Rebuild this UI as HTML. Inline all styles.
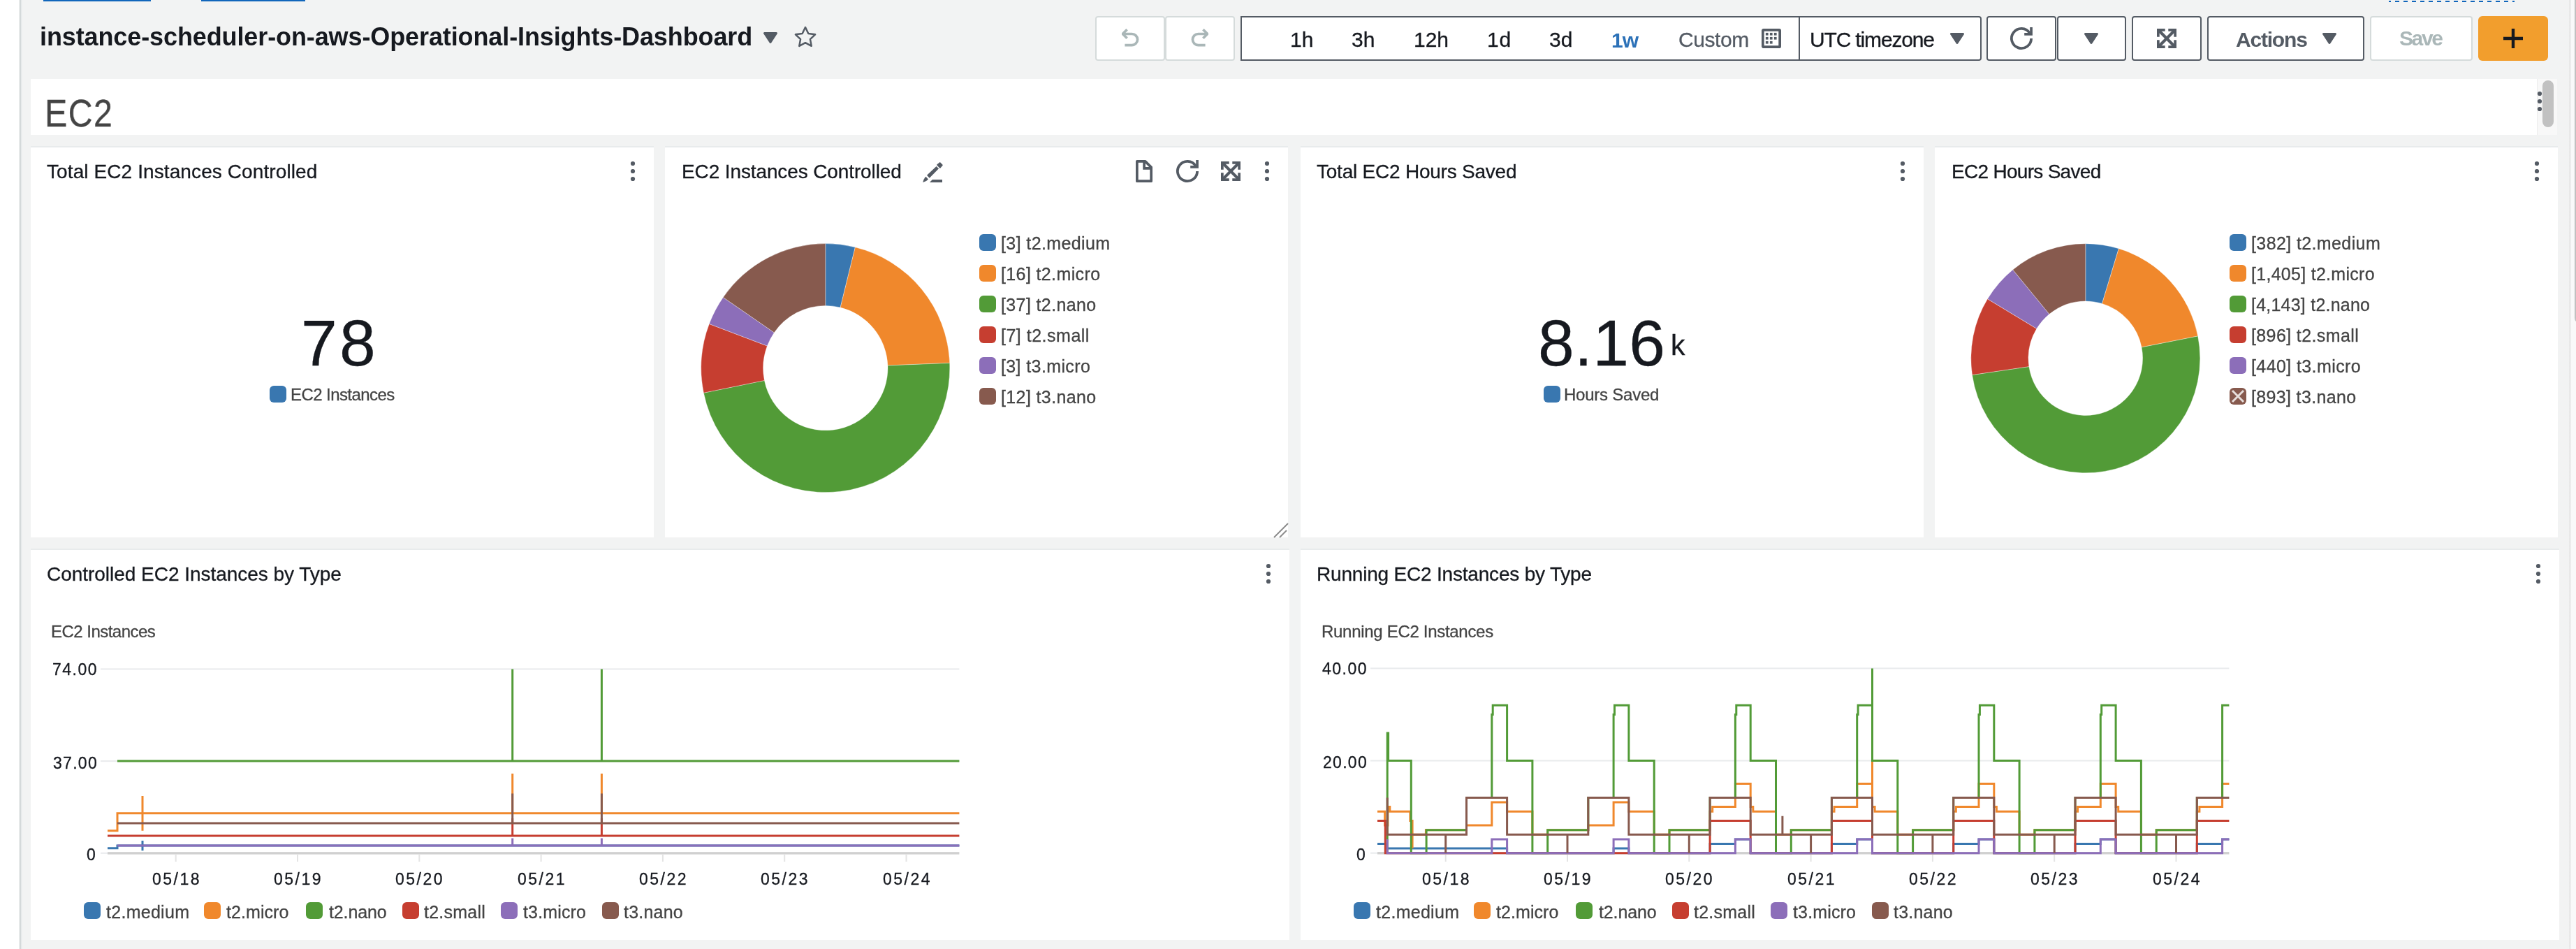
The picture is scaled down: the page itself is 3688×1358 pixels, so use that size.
<!DOCTYPE html><html><head><meta charset="utf-8"><style>
*{margin:0;padding:0;box-sizing:border-box}
html,body{width:3688px;height:1358px;overflow:hidden;background:#f2f3f3;font-family:"Liberation Sans",sans-serif}
.ab{position:absolute}
.t{position:absolute;white-space:nowrap;will-change:transform}
.r{-webkit-text-stroke:0.3px currentColor}
svg.ab{overflow:visible}
.panel{position:absolute;background:#fff;box-shadow:0 -2px 0 #e8ebec}
</style></head><body>
<div class="ab" style="left:0px;top:0px;width:28px;height:1358px;background:#fff"></div>
<div class="ab" style="left:28px;top:0px;width:4px;height:1358px;background:linear-gradient(90deg,#bfc5c7 0,#c3c9cb 1px,#d7dcdd 1px,#d7dcdd 2px,#e6e9ea 2px,#e6e9ea 3px,#eef0f0 3px)"></div>
<div class="ab" style="left:3678px;top:0px;width:3px;height:1358px;background:linear-gradient(90deg,#ededed 0,#e6e6e6 1px,#e6e6e6 2px,#f0f0f0 2px)"></div>
<div class="ab" style="left:3681px;top:0px;width:7px;height:1358px;background:#f9f9f9"></div>
<div class="ab" style="left:3686px;top:-10px;width:16px;height:473px;background:#c1c1c1;border-radius:8px"></div>
<div class="ab" style="left:62px;top:0px;width:154px;height:2px;background:#1166bb"></div>
<div class="ab" style="left:288px;top:0px;width:149px;height:2px;background:#1166bb"></div>
<div class="ab" style="left:3420px;top:1px;width:180px;height:2px;background:repeating-linear-gradient(90deg,#1166bb 0 6px,transparent 6px 12px);background-position:-3px 0"></div>
<div class="t" style="left:57px;top:34.5px;font-size:36px;line-height:36px;color:#16191f;font-weight:700;letter-spacing:-0.108px;">instance-scheduler-on-aws-Operational-Insights-Dashboard</div>
<svg class="ab" style="left:1093px;top:46px" width="20" height="16" viewBox="0 0 20 16"><path d="M1.5 1.5 H18.5 L10.0 14.5 Z" fill="#545b64" stroke="#545b64" stroke-width="3" stroke-linejoin="round"/></svg>
<svg class="ab" style="left:1137px;top:37px" width="32" height="31" viewBox="0 0 32 31"><polygon points="16.00,2.05 20.29,10.94 30.08,12.28 22.94,19.11 24.70,28.82 16.00,24.15 7.30,28.82 9.06,19.11 1.92,12.28 11.71,10.94" fill="none" stroke="#545b64" stroke-width="2.5" stroke-linejoin="round"/></svg>
<div class="ab" style="left:1568px;top:23px;width:100px;height:64px;border:2px solid #d5dbdb;border-radius:4px;background:#fff;"></div>
<div class="ab" style="left:1668px;top:23px;width:100px;height:64px;border:2px solid #d5dbdb;border-radius:4px;background:#fff;"></div>
<svg class="ab" style="left:1605.5px;top:41px" width="26" height="26" viewBox="0 0 26 26"><path d="M4.4 23.6 H14.5 A8.05 8.05 0 0 0 14.5 7.5 H2.5" fill="none" stroke="#aab7b8" stroke-width="3.7"/><path d="M7.6 1.2 L1.3 7.5 L7.6 13.8" fill="none" stroke="#aab7b8" stroke-width="3.7" stroke-linejoin="bevel"/></svg>
<svg class="ab" style="left:1704px;top:41px" width="26" height="26" viewBox="0 0 26 26"><g transform="translate(26 0) scale(-1 1)"><path d="M4.4 23.6 H14.5 A8.05 8.05 0 0 0 14.5 7.5 H2.5" fill="none" stroke="#aab7b8" stroke-width="3.7"/><path d="M7.6 1.2 L1.3 7.5 L7.6 13.8" fill="none" stroke="#aab7b8" stroke-width="3.7" stroke-linejoin="bevel"/></g></svg>
<div class="ab" style="left:1776px;top:23px;width:801px;height:64px;border:2px solid #545b64;border-radius:0;background:#fff;"></div>
<div class="t r" style="left:1846.5px;top:42.0px;font-size:30px;line-height:30px;color:#16191f;font-weight:400;letter-spacing:0.0px;">1h</div>
<div class="t r" style="left:1935px;top:42.0px;font-size:30px;line-height:30px;color:#16191f;font-weight:400;letter-spacing:0.0px;">3h</div>
<div class="t r" style="left:2023.7px;top:42.0px;font-size:30px;line-height:30px;color:#16191f;font-weight:400;letter-spacing:0.0px;">12h</div>
<div class="t r" style="left:2129px;top:42.0px;font-size:30px;line-height:30px;color:#16191f;font-weight:400;letter-spacing:0.9px;">1d</div>
<div class="t r" style="left:2218.4px;top:42.0px;font-size:30px;line-height:30px;color:#16191f;font-weight:400;letter-spacing:0.0px;">3d</div>
<div class="t" style="left:2306.7px;top:43.0px;font-size:30px;line-height:30px;color:#2d72b8;font-weight:700;letter-spacing:-0.9px;">1w</div>
<div class="t r" style="left:2403px;top:42.0px;font-size:30px;line-height:30px;color:#545b64;font-weight:400;letter-spacing:-0.42px;">Custom</div>
<svg class="ab" style="left:2522px;top:41px" width="28" height="28" viewBox="0 0 28 28"><rect x="1.85" y="1.85" width="24.3" height="24.3" rx="1" fill="none" stroke="#545b64" stroke-width="3.7"/><rect x="5.9" y="5.9" width="3.7" height="3.7" fill="#545b64"/><rect x="11.9" y="5.9" width="3.7" height="3.7" fill="#545b64"/><rect x="17.9" y="5.9" width="3.7" height="3.7" fill="#545b64"/><rect x="5.9" y="11.9" width="3.7" height="3.7" fill="#545b64"/><rect x="11.9" y="11.9" width="3.7" height="3.7" fill="#545b64"/><rect x="17.9" y="11.9" width="3.7" height="3.7" fill="#545b64"/><rect x="5.9" y="17.9" width="3.7" height="3.7" fill="#545b64"/><rect x="11.9" y="17.9" width="3.7" height="3.7" fill="#545b64"/></svg>
<div class="ab" style="left:2575px;top:23px;width:262px;height:64px;border:2px solid #545b64;border-radius:0 4px 4px 0;background:#fff;"></div>
<div class="t r" style="left:2591.3px;top:42.0px;font-size:30px;line-height:30px;color:#16191f;font-weight:400;letter-spacing:-1.1560000000000001px;">UTC timezone</div>
<svg class="ab" style="left:2792px;top:47px" width="20" height="16" viewBox="0 0 20 16"><path d="M1.5 1.5 H18.5 L10.0 14.5 Z" fill="#545b64" stroke="#545b64" stroke-width="3" stroke-linejoin="round"/></svg>
<div class="ab" style="left:2844px;top:23px;width:100px;height:64px;border:2px solid #545b64;border-radius:4px;background:#fff;"></div>
<svg class="ab" style="left:2878px;top:39px" width="32" height="32" viewBox="0 0 32 32"><path d="M30.1 16 A14.1 14.1 0 1 1 27.8 8.3" fill="none" stroke="#545b64" stroke-width="3.8"/><path d="M28.2 0 H31.9 V11.8 H20.2 V8.1 H28.2 Z" fill="#545b64"/></svg>
<div class="ab" style="left:2945px;top:23px;width:99px;height:64px;border:2px solid #545b64;border-radius:4px;background:#fff;"></div>
<svg class="ab" style="left:2984px;top:47px" width="20" height="16" viewBox="0 0 20 16"><path d="M1.5 1.5 H18.5 L10.0 14.5 Z" fill="#545b64" stroke="#545b64" stroke-width="3" stroke-linejoin="round"/></svg>
<div class="ab" style="left:3052px;top:23px;width:100px;height:64px;border:2px solid #545b64;border-radius:4px;background:#fff;"></div>
<svg class="ab" style="left:3088px;top:41px" width="28" height="28" viewBox="0 0 28 28"><path d="M0 0H11.7V3.7H3.7V11.7H0Z" fill="#545b64"/><g transform="translate(28 0) scale(-1 1)"><path d="M0 0H11.7V3.7H3.7V11.7H0Z" fill="#545b64"/></g><g transform="translate(0 28) scale(1 -1)"><path d="M0 0H11.7V3.7H3.7V11.7H0Z" fill="#545b64"/></g><g transform="translate(28 28) scale(-1 -1)"><path d="M0 0H11.7V3.7H3.7V11.7H0Z" fill="#545b64"/></g><path d="M2.6 2.6 L25.4 25.4 M25.4 2.6 L2.6 25.4" stroke="#545b64" stroke-width="4.2"/></svg>
<div class="ab" style="left:3160px;top:23px;width:225px;height:64px;border:2px solid #545b64;border-radius:4px;background:#fff;"></div>
<div class="t" style="left:3201.0px;top:42.0px;font-size:30px;line-height:30px;color:#545b64;font-weight:700;letter-spacing:-1.2px;">Actions</div>
<svg class="ab" style="left:3325px;top:47px" width="20" height="16" viewBox="0 0 20 16"><path d="M1.5 1.5 H18.5 L10.0 14.5 Z" fill="#545b64" stroke="#545b64" stroke-width="3" stroke-linejoin="round"/></svg>
<div class="ab" style="left:3393px;top:23px;width:147px;height:64px;border:2px solid #d5dbdb;border-radius:4px;background:#fff;"></div>
<div class="t" style="left:3434.5px;top:40.0px;font-size:30px;line-height:30px;color:#aab7b8;font-weight:700;letter-spacing:-2.4px;">Save</div>
<div class="ab" style="left:3548px;top:23px;width:100px;height:64px;background:#f29e2d;border-radius:6px"></div>
<svg class="ab" style="left:3584px;top:41px" width="28" height="28" viewBox="0 0 28 28"><path d="M14 0 V28 M0 14 H28" stroke="#16191f" stroke-width="4.4"/></svg>
<div class="ab" style="left:44px;top:113px;width:3588px;height:80px;background:#fff"></div>
<div class="ab" style="left:3632px;top:113px;width:29px;height:80px;background:#f8f8f8;border-left:1px solid #ececec"></div>
<div class="ab" style="left:3640px;top:115px;width:16px;height:67px;background:#c1c1c1;border-radius:8px"></div>
<div class="t r" style="left:64px;top:135.2px;font-size:55px;line-height:55px;color:#444;font-weight:400;letter-spacing:1.5px;transform:scaleX(0.88);transform-origin:0 0;">EC2</div>
<svg class="ab" style="left:3632px;top:130px" width="8" height="30" viewBox="0 0 8 30"><circle cx="4" cy="4" r="3.1" fill="#545b64"/><circle cx="4" cy="15" r="3.1" fill="#545b64"/><circle cx="4" cy="26" r="3.1" fill="#545b64"/></svg>
<div class="panel" style="left:44px;top:211px;width:892px;height:558px"></div>
<svg class="ab" style="left:902px;top:230px" width="8" height="30" viewBox="0 0 8 30"><circle cx="4" cy="4" r="3.1" fill="#545b64"/><circle cx="4" cy="15" r="3.1" fill="#545b64"/><circle cx="4" cy="26" r="3.1" fill="#545b64"/></svg>
<div class="panel" style="left:952px;top:211px;width:892px;height:558px"></div>
<svg class="ab" style="left:1810px;top:230px" width="8" height="30" viewBox="0 0 8 30"><circle cx="4" cy="4" r="3.1" fill="#545b64"/><circle cx="4" cy="15" r="3.1" fill="#545b64"/><circle cx="4" cy="26" r="3.1" fill="#545b64"/></svg>
<div class="panel" style="left:1862px;top:211px;width:892px;height:558px"></div>
<svg class="ab" style="left:2720px;top:230px" width="8" height="30" viewBox="0 0 8 30"><circle cx="4" cy="4" r="3.1" fill="#545b64"/><circle cx="4" cy="15" r="3.1" fill="#545b64"/><circle cx="4" cy="26" r="3.1" fill="#545b64"/></svg>
<div class="panel" style="left:2770px;top:211px;width:892px;height:558px"></div>
<svg class="ab" style="left:3628px;top:230px" width="8" height="30" viewBox="0 0 8 30"><circle cx="4" cy="4" r="3.1" fill="#545b64"/><circle cx="4" cy="15" r="3.1" fill="#545b64"/><circle cx="4" cy="26" r="3.1" fill="#545b64"/></svg>
<div class="t r" style="left:67.0px;top:232.1px;font-size:28px;line-height:28px;color:#16191f;font-weight:400;letter-spacing:0.099px;">Total EC2 Instances Controlled</div>
<div class="t r" style="left:976.0px;top:232.1px;font-size:28px;line-height:28px;color:#16191f;font-weight:400;letter-spacing:-0.119px;">EC2 Instances Controlled</div>
<div class="t r" style="left:1885.0px;top:232.1px;font-size:28px;line-height:28px;color:#16191f;font-weight:400;letter-spacing:-0.225px;">Total EC2 Hours Saved</div>
<div class="t r" style="left:2793.5px;top:232.1px;font-size:28px;line-height:28px;color:#16191f;font-weight:400;letter-spacing:-0.708px;">EC2 Hours Saved</div>
<svg class="ab" style="left:1321px;top:233px" width="28" height="28" viewBox="0 0 28 28"><path d="M21 2.9 L24.8 -0.1 L28 3.2 L24.8 7 Z" fill="#545b64" stroke="#545b64" stroke-width="1.5" stroke-linejoin="round"/><path d="M6 17.7 L19.6 5 L23 8.2 L9.7 21.8 Z" fill="#545b64"/><path d="M4.5 19.8 L8 23.4 Q5 27 0.2 27.9 Q1 23 4.5 19.8 Z" fill="#545b64"/><path d="M10 27.9 L13.8 24.1 H28 V27.9 Z" fill="#545b64"/></svg>
<svg class="ab" style="left:1626px;top:229px" width="24" height="32" viewBox="0 0 24 32"><path d="M1.85 1.85 H13.6 L22.15 10.4 V30.15 H1.85 Z" fill="none" stroke="#545b64" stroke-width="3.7" stroke-linejoin="round"/><path d="M12.1 1.85 V11.9 H22.15" fill="none" stroke="#545b64" stroke-width="3.7"/></svg>
<svg class="ab" style="left:1684px;top:229px" width="32" height="32" viewBox="0 0 32 32"><path d="M30.1 16 A14.1 14.1 0 1 1 27.8 8.3" fill="none" stroke="#545b64" stroke-width="3.8"/><path d="M28.2 0 H31.9 V11.8 H20.2 V8.1 H28.2 Z" fill="#545b64"/></svg>
<svg class="ab" style="left:1748px;top:231px" width="28" height="28" viewBox="0 0 28 28"><path d="M0 0H11.7V3.7H3.7V11.7H0Z" fill="#545b64"/><g transform="translate(28 0) scale(-1 1)"><path d="M0 0H11.7V3.7H3.7V11.7H0Z" fill="#545b64"/></g><g transform="translate(0 28) scale(1 -1)"><path d="M0 0H11.7V3.7H3.7V11.7H0Z" fill="#545b64"/></g><g transform="translate(28 28) scale(-1 -1)"><path d="M0 0H11.7V3.7H3.7V11.7H0Z" fill="#545b64"/></g><path d="M2.6 2.6 L25.4 25.4 M25.4 2.6 L2.6 25.4" stroke="#545b64" stroke-width="4.2"/></svg>
<svg class="ab" style="left:1820px;top:745px" width="26" height="26"><path d="M4 24 L24 4 M12 24 L22 14" stroke="#8c8c8c" stroke-width="2"/></svg>
<div class="t r" style="left:431.0px;top:445.0px;font-size:93px;line-height:93px;color:#16191f;font-weight:400;letter-spacing:3.2px;">78</div>
<div class="ab" style="left:386px;top:552px;width:24px;height:24px;background:#3977b0;border-radius:6px"></div>
<div class="t r" style="left:416.1px;top:553.2px;font-size:24px;line-height:24px;color:#444;font-weight:400;letter-spacing:-0.571px;">EC2 Instances</div>
<div class="t r" style="left:2201.5px;top:445.0px;font-size:93px;line-height:93px;color:#16191f;font-weight:400;letter-spacing:0.30000000000000004px;">8.16</div>
<div class="t r" style="left:2392px;top:474.1px;font-size:41px;line-height:41px;color:#16191f;font-weight:400;letter-spacing:0px;">k</div>
<div class="ab" style="left:2210px;top:552px;width:24px;height:24px;background:#3977b0;border-radius:6px"></div>
<div class="t r" style="left:2239.0px;top:553.2px;font-size:24px;line-height:24px;color:#444;font-weight:400;letter-spacing:-0.229px;">Hours Saved</div>
<svg class="ab" style="left:0;top:0" width="3688" height="1358"><path d="M1181.80 348.60 A178 178 0 0 1 1224.40 353.77 L1203.15 439.99 A89.2 89.2 0 0 0 1181.80 437.40 Z" fill="#3977b0" stroke="#fff" stroke-width="0.35"/><path d="M1224.40 353.77 A178 178 0 0 1 1359.66 519.43 L1270.93 523.01 A89.2 89.2 0 0 0 1203.15 439.99 Z" fill="#f0882c" stroke="#fff" stroke-width="0.35"/><path d="M1359.66 519.43 A178 178 0 0 1 1007.40 562.20 L1094.40 544.44 A89.2 89.2 0 0 0 1270.93 523.01 Z" fill="#529b37" stroke="#fff" stroke-width="0.35"/><path d="M1007.40 562.20 A178 178 0 0 1 1015.37 463.48 L1098.40 494.97 A89.2 89.2 0 0 0 1094.40 544.44 Z" fill="#c63e30" stroke="#fff" stroke-width="0.35"/><path d="M1015.37 463.48 A178 178 0 0 1 1035.31 425.48 L1108.39 475.93 A89.2 89.2 0 0 0 1098.40 494.97 Z" fill="#8c6eb9" stroke="#fff" stroke-width="0.35"/><path d="M1035.31 425.48 A178 178 0 0 1 1181.80 348.60 L1181.80 437.40 A89.2 89.2 0 0 0 1108.39 475.93 Z" fill="#875a4e" stroke="#fff" stroke-width="0.35"/><path d="M2985.80 348.70 A164 164 0 0 1 3033.35 355.75 L3009.52 434.41 A81.8 81.8 0 0 0 2985.80 430.90 Z" fill="#3977b0" stroke="#fff" stroke-width="0.35"/><path d="M3033.35 355.75 A164 164 0 0 1 3146.70 480.98 L3066.06 496.88 A81.8 81.8 0 0 0 3009.52 434.41 Z" fill="#f0882c" stroke="#fff" stroke-width="0.35"/><path d="M3146.70 480.98 A164 164 0 1 1 2823.54 536.52 L2904.87 524.58 A81.8 81.8 0 1 0 3066.06 496.88 Z" fill="#529b37" stroke="#fff" stroke-width="0.35"/><path d="M2823.54 536.52 A164 164 0 0 1 2845.50 427.78 L2915.82 470.34 A81.8 81.8 0 0 0 2904.87 524.58 Z" fill="#c63e30" stroke="#fff" stroke-width="0.35"/><path d="M2845.50 427.78 A164 164 0 0 1 2881.70 385.98 L2933.88 449.49 A81.8 81.8 0 0 0 2915.82 470.34 Z" fill="#8c6eb9" stroke="#fff" stroke-width="0.35"/><path d="M2881.70 385.98 A164 164 0 0 1 2985.80 348.70 L2985.80 430.90 A81.8 81.8 0 0 0 2933.88 449.49 Z" fill="#875a4e" stroke="#fff" stroke-width="0.35"/></svg>
<div class="ab" style="left:1402px;top:335px;width:24px;height:24px;background:#3977b0;border-radius:6px"></div>
<div class="t r" style="left:1433.4px;top:336.0px;font-size:25px;line-height:25px;color:#444;font-weight:400;letter-spacing:0.389px;">[3] t2.medium</div>
<div class="ab" style="left:3192px;top:335px;width:24px;height:24px;background:#3977b0;border-radius:6px"></div>
<div class="t r" style="left:3223.0px;top:336.0px;font-size:25px;line-height:25px;color:#444;font-weight:400;letter-spacing:0.39px;">[382] t2.medium</div>
<div class="ab" style="left:1402px;top:379px;width:24px;height:24px;background:#f0882c;border-radius:6px"></div>
<div class="t r" style="left:1433.4px;top:380.0px;font-size:25px;line-height:25px;color:#444;font-weight:400;letter-spacing:0.374px;">[16] t2.micro</div>
<div class="ab" style="left:3192px;top:379px;width:24px;height:24px;background:#f0882c;border-radius:6px"></div>
<div class="t r" style="left:3223.0px;top:380.0px;font-size:25px;line-height:25px;color:#444;font-weight:400;letter-spacing:0.282px;">[1,405] t2.micro</div>
<div class="ab" style="left:1402px;top:423px;width:24px;height:24px;background:#529b37;border-radius:6px"></div>
<div class="t r" style="left:1433.4px;top:424.0px;font-size:25px;line-height:25px;color:#444;font-weight:400;letter-spacing:0.376px;">[37] t2.nano</div>
<div class="ab" style="left:3192px;top:423px;width:24px;height:24px;background:#529b37;border-radius:6px"></div>
<div class="t r" style="left:3223.0px;top:424.0px;font-size:25px;line-height:25px;color:#444;font-weight:400;letter-spacing:0.228px;">[4,143] t2.nano</div>
<div class="ab" style="left:1402px;top:467px;width:24px;height:24px;background:#c63e30;border-radius:6px"></div>
<div class="t r" style="left:1433.4px;top:468.0px;font-size:25px;line-height:25px;color:#444;font-weight:400;letter-spacing:0.505px;">[7] t2.small</div>
<div class="ab" style="left:3192px;top:467px;width:24px;height:24px;background:#c63e30;border-radius:6px"></div>
<div class="t r" style="left:3223.0px;top:468.0px;font-size:25px;line-height:25px;color:#444;font-weight:400;letter-spacing:0.385px;">[896] t2.small</div>
<div class="ab" style="left:1402px;top:511px;width:24px;height:24px;background:#8c6eb9;border-radius:6px"></div>
<div class="t r" style="left:1433.4px;top:512.0px;font-size:25px;line-height:25px;color:#444;font-weight:400;letter-spacing:0.381px;">[3] t3.micro</div>
<div class="ab" style="left:3192px;top:511px;width:24px;height:24px;background:#8c6eb9;border-radius:6px"></div>
<div class="t r" style="left:3223.0px;top:512.0px;font-size:25px;line-height:25px;color:#444;font-weight:400;letter-spacing:0.402px;">[440] t3.micro</div>
<div class="ab" style="left:1402px;top:555px;width:24px;height:24px;background:#875a4e;border-radius:6px"></div>
<div class="t r" style="left:1433.4px;top:556.0px;font-size:25px;line-height:25px;color:#444;font-weight:400;letter-spacing:0.376px;">[12] t3.nano</div>
<div class="ab" style="left:3192px;top:555px;width:24px;height:24px;background:#875a4e;border-radius:6px"></div>
<div class="t r" style="left:3223.0px;top:556.0px;font-size:25px;line-height:25px;color:#444;font-weight:400;letter-spacing:0.344px;">[893] t3.nano</div>
<svg class="ab" style="left:3192px;top:555px" width="24" height="24"><path d="M4 4 L20 20 M20 4 L4 20" stroke="#fff" stroke-opacity="0.8" stroke-width="3"/></svg>
<div class="panel" style="left:44px;top:787px;width:1802px;height:558px"></div><svg class="ab" style="left:1812px;top:806px" width="8" height="30" viewBox="0 0 8 30"><circle cx="4" cy="4" r="3.1" fill="#545b64"/><circle cx="4" cy="15" r="3.1" fill="#545b64"/><circle cx="4" cy="26" r="3.1" fill="#545b64"/></svg><div class="t r" style="left:67.0px;top:807.5px;font-size:28px;line-height:28px;color:#16191f;font-weight:400;letter-spacing:-0.029px;">Controlled EC2 Instances by Type</div><div class="t r" style="left:73.2px;top:892.0px;font-size:24px;line-height:24px;color:#444;font-weight:400;letter-spacing:-0.525px;">EC2 Instances</div><div class="t r" style="left:75px;top:946.8px;font-size:23px;line-height:23px;color:#16191f;font-weight:400;letter-spacing:1.5px;">74.00</div><div class="t r" style="left:75.6px;top:1080.5px;font-size:23px;line-height:23px;color:#16191f;font-weight:400;letter-spacing:1.2850000000000001px;">37.00</div><div class="t r" style="left:123.6px;top:1212.2px;font-size:23px;line-height:23px;color:#16191f;font-weight:400;letter-spacing:0.6px;">0</div><svg class="ab" style="left:0;top:0" width="3688" height="1358"><rect x="144" y="956.4" width="1229.4" height="2" fill="#e9ebed"/><rect x="144" y="1088.1" width="1229.4" height="2" fill="#e9ebed"/><rect x="144" y="1219.8" width="10" height="2" fill="#e9ebed"/><rect x="154" y="1219.2" width="1219.4" height="3.4" fill="#d0d0d0"/><rect x="250.70000000000002" y="1223" width="2" height="10" fill="#e4e4e4"/><rect x="425.0" y="1223" width="2" height="10" fill="#e4e4e4"/><rect x="599.3000000000001" y="1223" width="2" height="10" fill="#e4e4e4"/><rect x="773.6" y="1223" width="2" height="10" fill="#e4e4e4"/><rect x="947.9" y="1223" width="2" height="10" fill="#e4e4e4"/><rect x="1122.2000000000003" y="1223" width="2" height="10" fill="#e4e4e4"/><rect x="1296.5000000000002" y="1223" width="2" height="10" fill="#e4e4e4"/><path d="M154.0 1213.7H168.0V1210.1H204.0V1203.0H204.0V1217.2H204.0V1210.1H1373.4" fill="none" stroke="#3977b0" stroke-width="3" stroke-linejoin="miter"/><path d="M154.0 1188.8H168.0V1163.8H204.0V1138.9H204.0V1188.8H204.0V1163.8H733.7V1106.9H733.7V1163.8H861.4V1106.9H861.4V1163.8H1373.4" fill="none" stroke="#f0882c" stroke-width="3" stroke-linejoin="miter"/><path d="M168.0 1089.1H733.7V957.4H733.7V1089.1H861.4V957.4H861.4V1089.1H1373.4" fill="none" stroke="#529b37" stroke-width="3" stroke-linejoin="miter"/><path d="M154.0 1195.9H733.7V1171.0H733.7V1195.9H861.4V1171.0H861.4V1195.9H1373.4" fill="none" stroke="#c63e30" stroke-width="3" stroke-linejoin="miter"/><path d="M168.0 1210.1H733.7V1199.4H733.7V1210.1H861.4V1199.4H861.4V1210.1H1373.4" fill="none" stroke="#8c6eb9" stroke-width="3" stroke-linejoin="miter"/><path d="M168.0 1178.1H733.7V1135.4H733.7V1178.1H861.4V1135.4H861.4V1178.1H1373.4" fill="none" stroke="#875a4e" stroke-width="3" stroke-linejoin="miter"/></svg><div class="t r" style="left:252.70000000000002px;top:1246.8px;font-size:23px;line-height:23px;color:#16191f;font-weight:400;letter-spacing:2.535px;transform:translateX(-50%);">05/18</div><div class="t r" style="left:427.0px;top:1246.8px;font-size:23px;line-height:23px;color:#16191f;font-weight:400;letter-spacing:2.535px;transform:translateX(-50%);">05/19</div><div class="t r" style="left:601.3000000000001px;top:1246.8px;font-size:23px;line-height:23px;color:#16191f;font-weight:400;letter-spacing:2.535px;transform:translateX(-50%);">05/20</div><div class="t r" style="left:775.6px;top:1246.8px;font-size:23px;line-height:23px;color:#16191f;font-weight:400;letter-spacing:2.535px;transform:translateX(-50%);">05/21</div><div class="t r" style="left:949.9px;top:1246.8px;font-size:23px;line-height:23px;color:#16191f;font-weight:400;letter-spacing:2.535px;transform:translateX(-50%);">05/22</div><div class="t r" style="left:1124.2000000000003px;top:1246.8px;font-size:23px;line-height:23px;color:#16191f;font-weight:400;letter-spacing:2.535px;transform:translateX(-50%);">05/23</div><div class="t r" style="left:1298.5000000000002px;top:1246.8px;font-size:23px;line-height:23px;color:#16191f;font-weight:400;letter-spacing:2.535px;transform:translateX(-50%);">05/24</div><div class="ab" style="left:120.3px;top:1291px;width:24.000000000000014px;height:24px;background:#3977b0;border-radius:6px"></div><div class="t r" style="left:152.20000000000002px;top:1292.5px;font-size:25px;line-height:25px;color:#444;font-weight:400;letter-spacing:0.281px;">t2.medium</div><div class="ab" style="left:292.2px;top:1291px;width:24.0px;height:24px;background:#f0882c;border-radius:6px"></div><div class="t r" style="left:324.2px;top:1292.5px;font-size:25px;line-height:25px;color:#444;font-weight:400;letter-spacing:0.075px;">t2.micro</div><div class="ab" style="left:438.4px;top:1291px;width:24.0px;height:24px;background:#529b37;border-radius:6px"></div><div class="t r" style="left:471.3px;top:1292.5px;font-size:25px;line-height:25px;color:#444;font-weight:400;letter-spacing:-0.135px;">t2.nano</div><div class="ab" style="left:576.2px;top:1291px;width:24.0px;height:24px;background:#c63e30;border-radius:6px"></div><div class="t r" style="left:607.4000000000001px;top:1292.5px;font-size:25px;line-height:25px;color:#444;font-weight:400;letter-spacing:0.229px;">t2.small</div><div class="ab" style="left:716.6px;top:1291px;width:24.0px;height:24px;background:#8c6eb9;border-radius:6px"></div><div class="t r" style="left:748.7px;top:1292.5px;font-size:25px;line-height:25px;color:#444;font-weight:400;letter-spacing:0.146px;">t3.micro</div><div class="ab" style="left:862.2px;top:1291px;width:24.0px;height:24px;background:#875a4e;border-radius:6px"></div><div class="t r" style="left:893.4000000000001px;top:1292.5px;font-size:25px;line-height:25px;color:#444;font-weight:400;letter-spacing:0.225px;">t3.nano</div>
<div class="panel" style="left:1862px;top:787px;width:1802px;height:558px"></div><svg class="ab" style="left:3630px;top:806px" width="8" height="30" viewBox="0 0 8 30"><circle cx="4" cy="4" r="3.1" fill="#545b64"/><circle cx="4" cy="15" r="3.1" fill="#545b64"/><circle cx="4" cy="26" r="3.1" fill="#545b64"/></svg><div class="t r" style="left:1885.0px;top:807.5px;font-size:28px;line-height:28px;color:#16191f;font-weight:400;letter-spacing:-0.196px;">Running EC2 Instances by Type</div><div class="t r" style="left:1892.2px;top:892.0px;font-size:24px;line-height:24px;color:#444;font-weight:400;letter-spacing:-0.3px;">Running EC2 Instances</div><div class="t r" style="left:1893px;top:945.8px;font-size:23px;line-height:23px;color:#16191f;font-weight:400;letter-spacing:1.5px;">40.00</div><div class="t r" style="left:1893.6px;top:1080.0px;font-size:23px;line-height:23px;color:#16191f;font-weight:400;letter-spacing:1.2850000000000001px;">20.00</div><div class="t r" style="left:1941.6px;top:1212.1px;font-size:23px;line-height:23px;color:#16191f;font-weight:400;letter-spacing:0.6px;">0</div><svg class="ab" style="left:0;top:0" width="3688" height="1358"><rect x="1962" y="955.4" width="1229.4" height="2" fill="#e9ebed"/><rect x="1962" y="1087.55" width="1229.4" height="2" fill="#e9ebed"/><rect x="1962" y="1219.7" width="10" height="2" fill="#e9ebed"/><rect x="1972" y="1219.1000000000001" width="1219.4" height="3.4" fill="#d0d0d0"/><rect x="2068.7000000000003" y="1223" width="2" height="10" fill="#e4e4e4"/><rect x="2243.0" y="1223" width="2" height="10" fill="#e4e4e4"/><rect x="2417.3" y="1223" width="2" height="10" fill="#e4e4e4"/><rect x="2591.6000000000004" y="1223" width="2" height="10" fill="#e4e4e4"/><rect x="2765.9" y="1223" width="2" height="10" fill="#e4e4e4"/><rect x="2940.2000000000003" y="1223" width="2" height="10" fill="#e4e4e4"/><rect x="3114.5" y="1223" width="2" height="10" fill="#e4e4e4"/><path d="M1972.0 1207.5H1984.0V1214.1H2157.6V1220.7H2310.1V1214.1H2331.9V1220.7H2448.1V1207.5H2484.4V1200.9H2506.2V1220.7H2622.4V1207.5H2658.7V1200.9H2680.5V1220.7H2796.7V1207.5H2833.0V1200.9H2854.8V1220.7H2971.0V1207.5H3007.3V1200.9H3029.1V1220.7H3145.3V1207.5H3181.6V1200.9H3191.4" fill="none" stroke="#3977b0" stroke-width="3" stroke-linejoin="miter"/><path d="M1972.0 1161.2H1982.6V1181.1H1986.9V1154.6H1989.8V1161.2H2018.9V1174.4H2022.1V1214.1H2022.1V1194.3H2041.4V1187.7H2099.5V1181.1H2135.8V1148.0H2157.6V1161.2H2193.9V1194.3H2215.7V1187.7H2273.8V1181.1H2310.1V1148.0H2331.9V1161.2H2368.2V1194.3H2390.0V1187.7H2448.1V1161.2H2451.7V1154.6H2484.4V1121.6H2506.2V1154.6H2509.8V1161.2H2542.5V1194.3H2564.3V1187.7H2622.4V1161.2H2626.0V1154.6H2658.7V1121.6H2680.5V1088.5H2680.5V1154.6H2684.1V1161.2H2716.8V1194.3H2738.6V1187.7H2796.7V1161.2H2800.3V1154.6H2833.0V1121.6H2854.8V1154.6H2858.4V1161.2H2891.1V1194.3H2912.9V1187.7H2971.0V1161.2H2974.6V1154.6H3007.3V1121.6H3029.1V1154.6H3032.7V1161.2H3065.4V1194.3H3087.2V1187.7H3145.3V1161.2H3148.9V1154.6H3181.6V1121.6H3191.4" fill="none" stroke="#f0882c" stroke-width="3" stroke-linejoin="miter"/><path d="M1986.2 1220.7H1986.2V1048.9H1987.6V1088.5H2020.3V1220.7H2042.1V1187.7H2099.5V1141.4H2135.8V1022.5H2137.2V1009.3H2157.6V1088.5H2193.9V1220.7H2215.7V1187.7H2273.8V1141.4H2310.1V1022.5H2311.5V1009.3H2331.9V1088.5H2368.2V1220.7H2390.0V1187.7H2448.1V1141.4H2484.4V1022.5H2485.8V1009.3H2506.2V1088.5H2542.5V1220.7H2564.3V1187.7H2622.4V1141.4H2658.7V1022.5H2660.1V1009.3H2680.5V956.4H2680.5V1088.5H2716.8V1220.7H2738.6V1187.7H2796.7V1141.4H2833.0V1022.5H2834.4V1009.3H2854.8V1088.5H2891.1V1220.7H2912.9V1187.7H2971.0V1141.4H3007.3V1022.5H3008.7V1009.3H3029.1V1088.5H3065.4V1220.7H3087.2V1187.7H3145.3V1141.4H3181.6V1009.3H3191.4" fill="none" stroke="#529b37" stroke-width="3" stroke-linejoin="miter"/><path d="M1972.0 1174.4H1983.3V1220.7H2448.1V1174.4H2506.2V1220.7H2622.4V1174.4H2680.5V1220.7H2796.7V1174.4H2854.8V1220.7H2971.0V1174.4H3029.1V1220.7H3145.3V1174.4H3191.4" fill="none" stroke="#c63e30" stroke-width="3" stroke-linejoin="miter"/><path d="M1986.2 1200.9H1986.2V1220.7H2135.8V1200.9H2157.6V1220.7H2310.1V1200.9H2331.9V1220.7H2484.4V1200.9H2506.2V1220.7H2658.7V1200.9H2680.5V1220.7H2833.0V1200.9H2854.8V1220.7H3007.3V1200.9H3029.1V1220.7H3181.6V1200.9H3191.4" fill="none" stroke="#8c6eb9" stroke-width="3" stroke-linejoin="miter"/><path d="M1986.2 1141.4H1986.2V1194.3H2069.7V1220.7H2069.7V1194.3H2099.5V1141.4H2157.6V1194.3H2244.0V1220.7H2244.0V1194.3H2273.8V1141.4H2331.9V1194.3H2418.3V1220.7H2418.3V1194.3H2448.1V1141.4H2506.2V1194.3H2551.9V1167.8H2551.9V1194.3H2592.6V1220.7H2592.6V1194.3H2622.4V1141.4H2680.5V1194.3H2766.9V1220.7H2766.9V1194.3H2796.7V1141.4H2854.8V1194.3H2941.2V1220.7H2941.2V1194.3H2971.0V1141.4H3029.1V1194.3H3115.5V1220.7H3115.5V1194.3H3145.3V1141.4H3191.4" fill="none" stroke="#875a4e" stroke-width="3" stroke-linejoin="miter"/></svg><div class="t r" style="left:2070.7000000000003px;top:1246.8px;font-size:23px;line-height:23px;color:#16191f;font-weight:400;letter-spacing:2.535px;transform:translateX(-50%);">05/18</div><div class="t r" style="left:2245.0px;top:1246.8px;font-size:23px;line-height:23px;color:#16191f;font-weight:400;letter-spacing:2.535px;transform:translateX(-50%);">05/19</div><div class="t r" style="left:2419.3px;top:1246.8px;font-size:23px;line-height:23px;color:#16191f;font-weight:400;letter-spacing:2.535px;transform:translateX(-50%);">05/20</div><div class="t r" style="left:2593.6000000000004px;top:1246.8px;font-size:23px;line-height:23px;color:#16191f;font-weight:400;letter-spacing:2.535px;transform:translateX(-50%);">05/21</div><div class="t r" style="left:2767.9px;top:1246.8px;font-size:23px;line-height:23px;color:#16191f;font-weight:400;letter-spacing:2.535px;transform:translateX(-50%);">05/22</div><div class="t r" style="left:2942.2000000000003px;top:1246.8px;font-size:23px;line-height:23px;color:#16191f;font-weight:400;letter-spacing:2.535px;transform:translateX(-50%);">05/23</div><div class="t r" style="left:3116.5px;top:1246.8px;font-size:23px;line-height:23px;color:#16191f;font-weight:400;letter-spacing:2.535px;transform:translateX(-50%);">05/24</div><div class="ab" style="left:1938.3px;top:1291px;width:24.0px;height:24px;background:#3977b0;border-radius:6px"></div><div class="t r" style="left:1970.1999999999998px;top:1292.5px;font-size:25px;line-height:25px;color:#444;font-weight:400;letter-spacing:0.281px;">t2.medium</div><div class="ab" style="left:2110.2px;top:1291px;width:24.0px;height:24px;background:#f0882c;border-radius:6px"></div><div class="t r" style="left:2142.2px;top:1292.5px;font-size:25px;line-height:25px;color:#444;font-weight:400;letter-spacing:0.075px;">t2.micro</div><div class="ab" style="left:2256.4px;top:1291px;width:24.0px;height:24px;background:#529b37;border-radius:6px"></div><div class="t r" style="left:2289.3px;top:1292.5px;font-size:25px;line-height:25px;color:#444;font-weight:400;letter-spacing:-0.135px;">t2.nano</div><div class="ab" style="left:2394.2px;top:1291px;width:24.0px;height:24px;background:#c63e30;border-radius:6px"></div><div class="t r" style="left:2425.3999999999996px;top:1292.5px;font-size:25px;line-height:25px;color:#444;font-weight:400;letter-spacing:0.229px;">t2.small</div><div class="ab" style="left:2534.6px;top:1291px;width:24.0px;height:24px;background:#8c6eb9;border-radius:6px"></div><div class="t r" style="left:2566.7px;top:1292.5px;font-size:25px;line-height:25px;color:#444;font-weight:400;letter-spacing:0.146px;">t3.micro</div><div class="ab" style="left:2680.2px;top:1291px;width:24.0px;height:24px;background:#875a4e;border-radius:6px"></div><div class="t r" style="left:2711.3999999999996px;top:1292.5px;font-size:25px;line-height:25px;color:#444;font-weight:400;letter-spacing:0.225px;">t3.nano</div>
</body></html>
